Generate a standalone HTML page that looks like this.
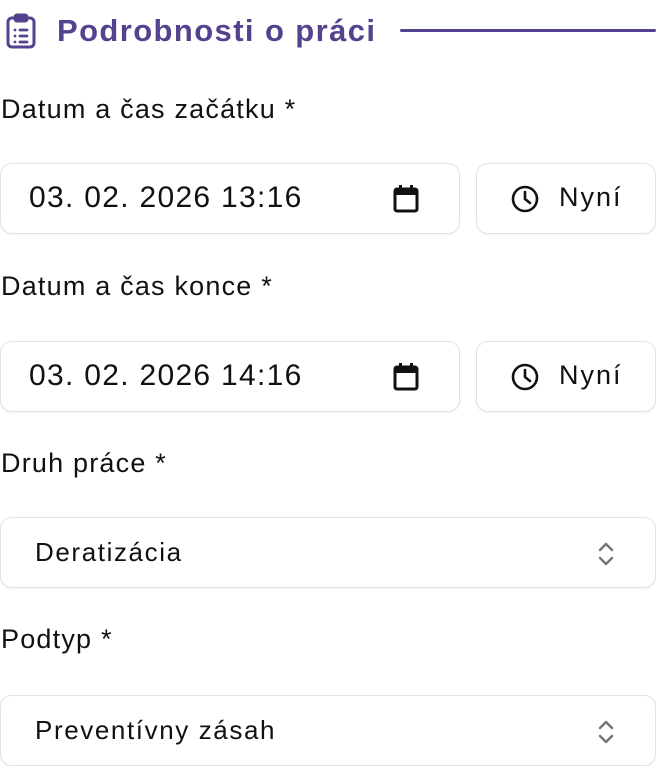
<!DOCTYPE html><html><head><meta charset="utf-8"><style>
*{box-sizing:border-box;margin:0;padding:0}
body{width:656px;height:766px;background:#fff;font-family:"Liberation Sans",sans-serif;color:#111;position:relative;overflow:hidden}
.a{position:absolute}
.title{left:57px;top:13px;font-size:31px;font-weight:bold;color:#54428e;white-space:nowrap;letter-spacing:1.4px}
.line{left:400px;top:29px;width:256px;height:3px;background:#54428e;border-radius:2px}
.lab{left:1px;font-size:27px;white-space:nowrap;letter-spacing:1.2px}
.box{border:1.5px solid #e2e2e2;border-radius:12px;background:#fff;box-shadow:0 1px 2px rgba(0,0,0,.05)}
.val{position:absolute;left:28px;top:17px;font-size:30px;letter-spacing:1.3px}
.sel{position:absolute;left:34px;top:19px;font-size:26px;letter-spacing:1.6px}
.btn{font-size:27px;letter-spacing:2px}
</style></head><body>
<svg class="a" style="left:6px;top:13px" width="30" height="36" viewBox="0 0 30 36" fill="none" stroke="#54428e" stroke-width="3" stroke-linecap="round"><rect x="2" y="5" width="26" height="29" rx="4"/><rect x="9" y="2" width="12" height="6" rx="2"/><path d="M9 17h0M14 17h7M9 23h0M14 23h7M9 29h0M14 29h7" stroke-width="2.8"/></svg>
<div class="a title">Podrobnosti o práci</div>
<div class="a line"></div>

<div class="a lab" style="top:94px">Datum a čas začátku *</div>
<div class="a box" style="left:0;top:163px;width:460px;height:71px"><span class="val">03. 02. 2026 13:16</span>
<svg class="a" style="left:392px;top:21px" width="26" height="28" viewBox="0 0 26 28"><rect x="2" y="4" width="22" height="22" rx="2" fill="none" stroke="#111" stroke-width="3"/><rect x="2" y="4" width="22" height="6" fill="#111"/><rect x="6" y="0" width="3" height="6" fill="#111"/><rect x="17" y="0" width="3" height="6" fill="#111"/></svg></div>
<div class="a box" style="left:476px;top:163px;width:180px;height:71px"><svg class="a" style="left:33px;top:20px" width="30" height="30" viewBox="0 0 30 30" fill="none" stroke="#111" stroke-width="2.6" stroke-linecap="round"><circle cx="15" cy="15" r="12"/><path d="M15 8v7l5 4"/></svg><span class="a btn" style="left:82px;top:18px">Nyní</span></div>

<div class="a lab" style="top:271px">Datum a čas konce *</div>
<div class="a box" style="left:0;top:341px;width:460px;height:71px"><span class="val">03. 02. 2026 14:16</span>
<svg class="a" style="left:392px;top:21px" width="26" height="28" viewBox="0 0 26 28"><rect x="2" y="4" width="22" height="22" rx="2" fill="none" stroke="#111" stroke-width="3"/><rect x="2" y="4" width="22" height="6" fill="#111"/><rect x="6" y="0" width="3" height="6" fill="#111"/><rect x="17" y="0" width="3" height="6" fill="#111"/></svg></div>
<div class="a box" style="left:476px;top:341px;width:180px;height:71px"><svg class="a" style="left:33px;top:20px" width="30" height="30" viewBox="0 0 30 30" fill="none" stroke="#111" stroke-width="2.6" stroke-linecap="round"><circle cx="15" cy="15" r="12"/><path d="M15 8v7l5 4"/></svg><span class="a btn" style="left:82px;top:18px">Nyní</span></div>

<div class="a lab" style="top:448px">Druh práce *</div>
<div class="a box" style="left:0;top:517px;width:656px;height:71px"><span class="sel">Deratizácia</span>
<svg class="a" style="left:595px;top:22px" width="20" height="28" viewBox="0 0 20 28" fill="none" stroke="#777" stroke-width="2.5" stroke-linecap="round" stroke-linejoin="round"><path d="M4 10l6-6 6 6M4 18l6 6 6-6"/></svg></div>

<div class="a lab" style="top:624px">Podtyp *</div>
<div class="a box" style="left:0;top:695px;width:656px;height:71px"><span class="sel">Preventívny zásah</span>
<svg class="a" style="left:595px;top:22px" width="20" height="28" viewBox="0 0 20 28" fill="none" stroke="#777" stroke-width="2.5" stroke-linecap="round" stroke-linejoin="round"><path d="M4 10l6-6 6 6M4 18l6 6 6-6"/></svg></div>
</body></html>
